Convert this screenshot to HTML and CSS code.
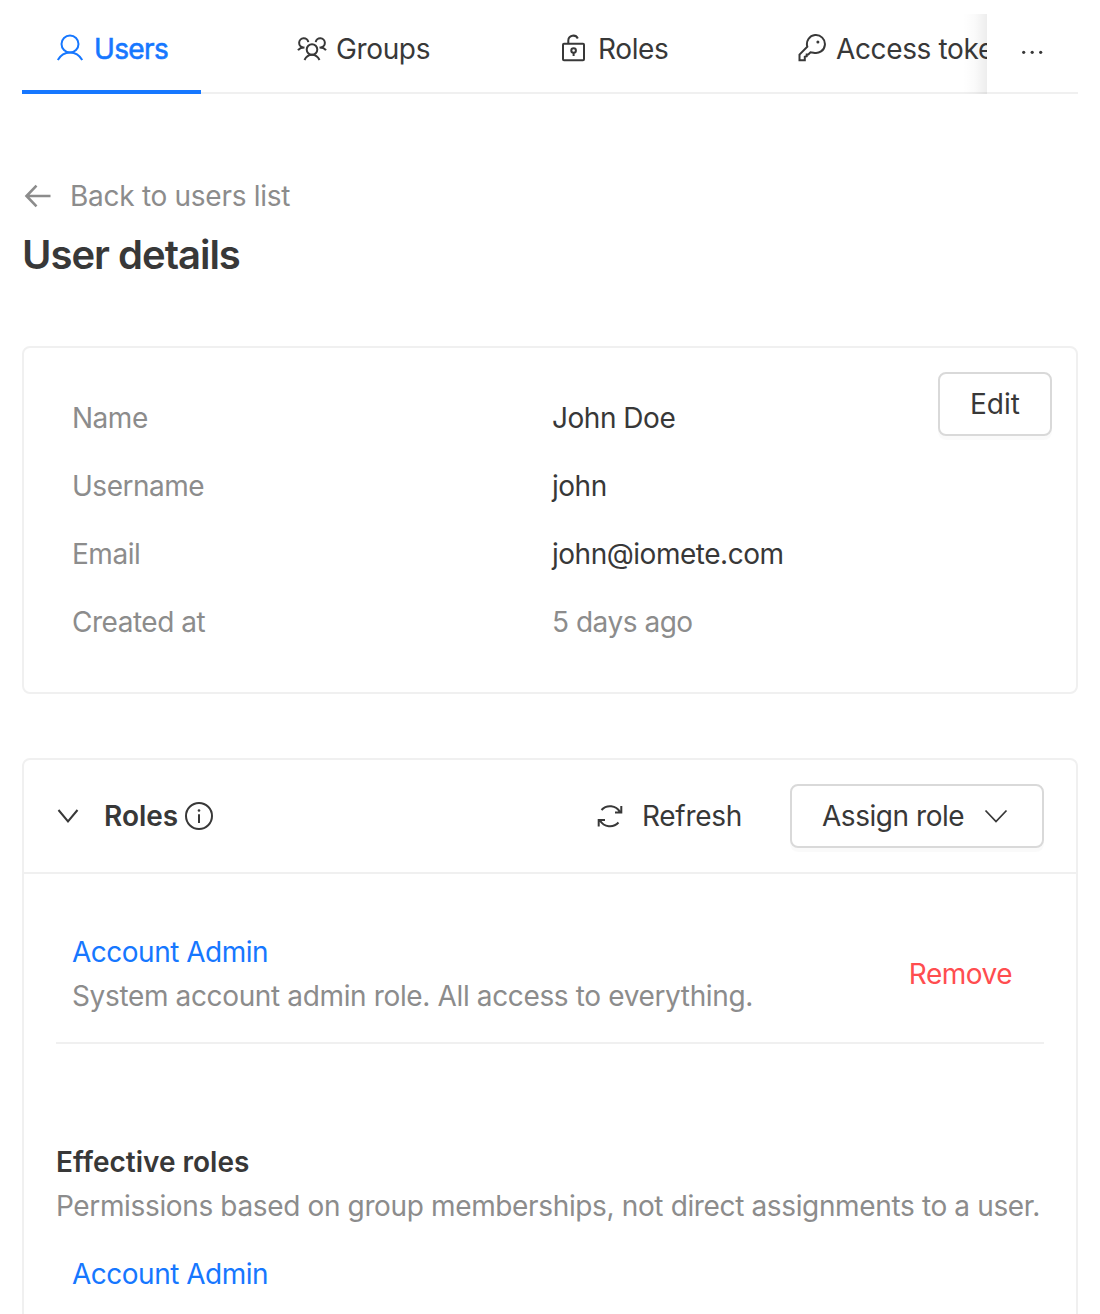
FILE: index.html
```html
<!DOCTYPE html>
<html lang="en">
<head>
<meta charset="utf-8">
<title>User details</title>
<link rel="stylesheet" href="styles.css">
</head>
<body>
<nav class="tabs">
  <div class="tab-list">
    <a class="tab tab-users active">
      <svg class="icon" viewBox="0 0 28 28"><circle cx="14" cy="10" r="8.5"/><path d="M1.8 26C4.8 20.8 9 18.5 14 18.5S23.200 20.800 26.200 26"/></svg>
      <span>Users</span>
    </a>
    <a class="tab tab-groups">
      <svg class="icon icon-groups" viewBox="0 0 30 28"><circle cx="15" cy="15.500" r="5.300"/><path d="M7.500 26C9.200 22.500 12 20.800 15 20.800S20.800 22.500 22.500 26"/><path d="M11.300 8.200A4.600 4.600 0 1 0 6.200 13.400M1 16.300C2.300 14.300 4 13.400 7.500 13.400"/><path d="M18.700 8.200A4.600 4.600 0 1 1 23.800 13.400M29 16.300C27.700 14.300 26 13.400 22.500 13.400"/></svg>
      <span>Groups</span>
    </a>
    <a class="tab tab-roles">
      <svg class="icon" viewBox="0 0 28 28"><rect x="3" y="9.700" width="21" height="16.600" rx="1"/><path d="M8.300 9.700V6.500a5 5 0 0 1 9.500-2"/><circle cx="13.600" cy="16.500" r="2.300"/><path d="M13.600 18.800V22"/></svg>
      <span>Roles</span>
    </a>
    <a class="tab tab-tokens">
      <svg class="icon" viewBox="0 0 28 28"><path d="M9.300 12.600A9 9 0 1 1 15.500 18.700L12.500 18.300 10.300 20.500H8.700V22.200L6.800 22.700V26.200H1.500V20.600Z"/><circle class="dot" cx="19.900" cy="7.900" r="1.500"/></svg>
      <span>Access tokens</span>
    </a>
  </div>
  <button class="more"><svg width="24" height="6" viewBox="0 0 24 6"><circle class="dot" cx="2.700" cy="2.300" r="1.600"/><circle class="dot" cx="11.200" cy="2.300" r="1.600"/><circle class="dot" cx="19.700" cy="2.300" r="1.600"/></svg></button>
</nav>

<main>
  <a class="back">
    <svg width="28" height="28" viewBox="0 0 28 28"><path d="M26.500 14H2.500M12.500 3.700L2.500 14L12.500 24.300"/></svg>
    <span>Back to users list</span>
  </a>
  <h1>User details</h1>

  <section class="card details">
    <dl>
      <dt>Name</dt><dd>John Doe</dd>
      <dt>Username</dt><dd>john</dd>
      <dt>Email</dt><dd>john@iomete.com</dd>
      <dt>Created at</dt><dd class="muted">5 days ago</dd>
    </dl>
    <button class="button edit">Edit</button>
  </section>

  <section class="card roles">
    <header class="roles-header">
      <svg class="caret" width="24" height="24" viewBox="0 0 24 24"><path d="M2.500 6L12 17.500L21.500 6"/></svg>
      <h2>Roles</h2>
      <svg class="info" width="28" height="28" viewBox="0 0 28 28"><circle cx="14" cy="14" r="13"/><path d="M14 12.300V21"/><circle class="dot" cx="14" cy="8.500" r="1.300"/></svg>
      <a class="refresh">
        <svg width="28" height="28" viewBox="0 0 28 28"><path d="M5.500 8A11.500 11.500 0 0 1 24 10M25.300 4V10.600H19M22.500 20.500A11.500 11.500 0 0 1 4 18.500M2.700 24.500V18H9"/></svg>
        <span>Refresh</span>
      </a>
      <button class="button assign"><span>Assign role</span><svg width="24" height="24" viewBox="0 0 24 24"><path d="M1.500 6.500L12 17.500L22.500 6.500"/></svg></button>
    </header>
    <div class="roles-body">
      <div class="role">
        <div>
          <a class="link">Account Admin</a>
          <p class="role-note">System account admin role. All access to everything.</p>
        </div>
        <a class="remove">Remove</a>
      </div>
      <h3>Effective roles</h3>
      <p class="effective-note">Permissions based on group memberships, not direct assignments to a user.</p>
      <a class="link effective-link">Account Admin</a>
    </div>
  </section>
</main>
</body>
</html>
```

FILE: styles.css
```css
* { box-sizing: border-box; }
body {
  margin: 0;
  height: 1314px;
  padding: 14px 22px 0;
  overflow: hidden;
  background: #fff;
  color: #383838;
  font: 28px/44px Inter, "Liberation Sans", sans-serif;
  letter-spacing: -.36px;
  white-space: nowrap;
}
h1, h2, h3, p, dl, dd { margin: 0; }
svg {
  display: block;
  flex: none;
  fill: none;
  stroke: currentColor;
  stroke-width: 2;
}
svg .dot { fill: currentColor; stroke: none; }
button { font: inherit; color: inherit; letter-spacing: inherit; }

.tabs { display: flex; height: 80px; border-bottom: 2px solid #f0f0f0; }
.tab-list {
  position: relative;
  display: flex;
  width: 965px;
  height: 80px;
  overflow: hidden;
}
.tab-list::after {
  content: "";
  position: absolute;
  inset: 0 0 0 auto;
  width: 24px;
  background: linear-gradient(to right, rgba(0,0,0,0), rgba(0,0,0,.02) 50%, rgba(0,0,0,.07));
}
.tab {
  display: flex;
  flex: none;
  gap: 10px;
  height: 80px;
  padding: 13px 0 0 34px;
}
.tab .icon { width: 28px; height: 28px; margin-top: 7px; }
.tab .icon-groups { width: 30px; }
.tab-users { width: 179px; margin-right: 62px; }
.tab-groups { width: 263px; gap: 9px; }
.tab-roles { width: 238px; }
.active { color: #1677ff; border-bottom: 4px solid #1677ff; }
.active span { letter-spacing: -.65px; -webkit-text-stroke: .6px; }
.more { flex: 1; padding: 0 0 0 34px; border: 0; background: none; }

.back { display: flex; align-items: center; gap: 18px; margin-top: 80px; padding-left: 2px; color: #8c8c8c; letter-spacing: -.28px; }
.back svg { stroke-width: 2.600; }
h1 { margin-top: 9px; font-size: 40px; line-height: 56px; font-weight: 600; letter-spacing: -1px; }
.card { border: 2px solid #f0f0f0; border-radius: 8px; }
.details {
  display: flex;
  align-items: flex-start;
  justify-content: space-between;
  height: 348px;
  margin-top: 63px;
  padding: 24px 24px 0 48px;
}
dl { display: grid; grid-template-columns: 480px 300px; row-gap: 24px; margin-top: 24px; letter-spacing: -.48px; }
dt, .muted { color: #8c8c8c; }
.button {
  height: 64px;
  border: 2px solid #d9d9d9;
  border-radius: 8px;
  background: #fff;
  box-shadow: 0 4px 0 rgba(0,0,0,.02);
}
.edit { width: 114px; padding: 0; letter-spacing: 0; }

.roles { height: 620px; margin-top: 64px; }
.roles-header {
  display: flex;
  align-items: center;
  height: 114px;
  padding: 0 32px;
  border-bottom: 2px solid #f0f0f0;
}
.caret { margin-right: 24px; }
h2, h3 { font-size: 28px; line-height: 44px; font-weight: 600; letter-spacing: 0; }
h2 { width: 81px; }
.refresh { display: flex; align-items: center; gap: 18px; width: 194px; margin-left: auto; letter-spacing: -.3px; }
.assign { display: flex; align-items: center; justify-content: space-between; width: 254px; padding: 0 34px 0 30px; letter-spacing: -.46px; }
.assign svg { stroke-width: 1.800; }
.roles-body { padding: 56px 32px 0; }
.role {
  display: flex;
  align-items: center;
  justify-content: space-between;
  height: 114px;
  padding: 0 32px 24px 16px;
  border-bottom: 2px solid #f0f0f0;
}
.link { display: block; color: #1677ff; letter-spacing: -.5px; }
.role-note, .effective-note { color: #8c8c8c; }
.remove { color: #ff4d4f; letter-spacing: -.5px; }
h3 { margin-top: 96px; }
.effective-link { margin: 24px 0 0 16px; }
```
